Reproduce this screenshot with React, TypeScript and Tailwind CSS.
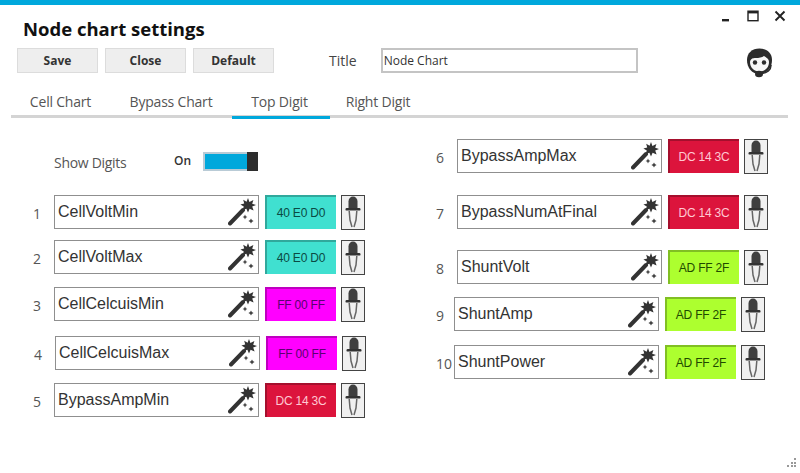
const seg = "font-['Open_Sans','Noto_Sans',sans-serif]";

function Wand() {
  return (
    <svg width="28" height="28" viewBox="0 0 28 28" className="shrink-0">
      <path d="M2 25.5 L15 12" stroke="#333" strokeWidth="4" strokeLinecap="round" />
      <path d="M20 0 L21.4 4 L25.4 2 L24.2 5.8 L28 7 L24.2 8.6 L25.6 12.6 L21.6 10.8 L20 14.6 L18.4 10.8 L14.6 12 L15.8 8.4 L12.4 6.4 L16.2 5.6 L15.2 1.8 L18.6 3.8 Z" fill="#333" />
      <path d="M17 16.6 l.8 1.6 1.6.8 -1.6.8 -.8 1.6 -.8-1.6 -1.6-.8 1.6-.8 z" fill="#444" />
      <path d="M23 20.4 l.9 1.7 1.7.9 -1.7.9 -.9 1.7 -.9-1.7 -1.7-.9 1.7-.9 z" fill="#444" />
    </svg>
  );
}

function Dropper() {
  return (
    <svg width="18" height="32" viewBox="0 0 18 32">
      <path d="M4.5 13 V5.5 a4.5 5 0 0 1 9 0 V13 Z" fill="#3f3f3f" />
      <rect x="1.5" y="12" width="15" height="2.6" rx="1.2" fill="#333" />
      <path d="M5.2 15 L6 24 L8 31 M12.8 15 L12 24 L10 31" fill="none" stroke="#666" strokeWidth="1.5" />
    </svg>
  );
}

function Avatar() {
  return (
    <svg width="27" height="30" viewBox="0 0 27 30">
      <path d="M13.5 0.5 C6 0.5 1 5 1 12 C1 20 6 26 13.5 26 C21 26 26 20 26 12 C26 5 21 0.5 13.5 0.5 Z" fill="#2b2b2b" />
      <path d="M4 14 C4.5 10.5 7 10 9.5 10 C13 10 16 9.5 18 8 C20 9.5 23 10.5 23 14 C23 19.5 19 23.5 13.5 23.5 C8 23.5 4 19.5 4 14 Z" fill="#f6f6f6" />
      <circle cx="9" cy="14.5" r="2.2" fill="#2b2b2b" />
      <circle cx="18" cy="14.5" r="2.2" fill="#2b2b2b" />
      <path d="M25 17 C25 22 21 25 16 25.5" fill="none" stroke="#2b2b2b" strokeWidth="1.6" />
      <ellipse cx="13" cy="26" rx="4" ry="3.2" fill="#2b2b2b" />
    </svg>
  );
}

type RowProps = {
  n: number;
  name: string;
  hex: string;
  bg: string;
  text: string;
  numW?: string;
  cls?: string;
};

function Row({ n, name, hex, bg, text, numW = "w-[24px]", cls = "" }: RowProps) {
  return (
    <div className={`flex items-center h-[34px] ${cls}`}>
      <span className={`${numW} shrink-0 pl-[3px] mt-[2px] text-[14px] text-[#555] ${seg}`}>{n}</span>
      <div className="w-[205px] h-[34px] border border-[#8f8f8f] bg-white flex items-center justify-between pl-[3px] pr-[2px] shrink-0">
        <span className="font-['Liberation_Sans',sans-serif] text-[16px] text-[#333]">{name}</span>
        <Wand />
      </div>
      <div className={`ml-[5.5px] w-[71px] h-[34px] ${bg} border-t-2 border-l-2 border-t-black/25 border-l-black/25 flex items-center justify-center shrink-0`}>
        <span className={`font-['Liberation_Sans',sans-serif] text-[12px] tracking-[-0.2px] ${text}`}>{hex}</span>
      </div>
      <div className="ml-[5px] w-[24px] h-[35px] border-[1.5px] border-[#444] bg-[#f0f0f0] flex items-center justify-center shrink-0">
        <Dropper />
      </div>
    </div>
  );
}

const teal = { hex: "40 E0 D0", bg: "bg-[#40e0d0]", text: "text-[#0b4a44]" };
const pink = { hex: "FF 00 FF", bg: "bg-[#ff00ff]", text: "text-[#5a0070]" };
const red = { hex: "DC 14 3C", bg: "bg-[#dc143c]", text: "text-[#ffc8d2]" };
const lime = { hex: "AD FF 2F", bg: "bg-[#adff2f]", text: "text-[#1f4a00]" };

function Btn({ label }: { label: string }) {
  return (
    <button className={`w-[81px] h-[25px] bg-[#eeeeee] border border-[#dcdcdc] text-[12px] font-bold text-[#333] ${seg}`}>
      {label}
    </button>
  );
}

function Tab({ label, active, cls }: { label: string; active?: boolean; cls: string }) {
  return (
    <div className={`h-[36px] flex items-center justify-center pt-[3px] text-[14px] tracking-[-0.2px] text-[#555] ${seg} border-b-[3px] -mb-[3px] ${active ? "border-[#00a8dc]" : "border-transparent"} ${cls}`}>
      {label}
    </div>
  );
}

export default function App() {
  return (
    <div className="relative w-[800px] h-[473px] bg-white overflow-hidden">
      <div className="h-[5px] bg-[#00a8dc]" />

      <div className="absolute top-[10px] right-[14px] flex items-center gap-[15px] text-[#222]">
        <svg width="11" height="12" viewBox="0 0 11 12"><rect x="1" y="9" width="7" height="2.4" fill="#222" /></svg>
        <svg width="12" height="12" viewBox="0 0 12 12"><rect x="1" y="1.2" width="10" height="9.5" fill="none" stroke="#222" strokeWidth="1.4" /><rect x="1" y="1" width="10" height="2.4" fill="#222" /></svg>
        <svg width="12" height="12" viewBox="0 0 12 12"><path d="M1.5 1.5 L10.5 10.5 M10.5 1.5 L1.5 10.5" stroke="#222" strokeWidth="1.9" /></svg>
      </div>

      <div className="absolute top-[48px] left-[746px]"><Avatar /></div>

      <h1 className={`ml-[23px] mt-[11px] h-[26px] leading-[26px] text-[18.5px] font-bold text-[#111] ${seg}`}>Node chart settings</h1>

      <div className="flex items-center mt-[6px] ml-[17px] h-[25px]">
        <div className="flex gap-[7px]">
          <Btn label="Save" />
          <Btn label="Close" />
          <Btn label="Default" />
        </div>
        <span className={`ml-[55px] text-[14px] text-[#444] ${seg}`}>Title</span>
        <div className={`ml-[24px] w-[257px] h-[25px] border-2 border-[#c4c4c4] bg-white flex items-center pl-[1px] text-[12px] text-[#333] ${seg}`}>Node Chart</div>
      </div>

      <div className="flex mt-[10px] ml-[11px] w-[777px] h-[35px] border-b-[3px] border-[#d4d4d4]">
        <Tab label="Cell Chart" cls="w-[99px]" />
        <Tab label="Bypass Chart" cls="w-[122px]" />
        <Tab label="Top Digit" active cls="w-[98px] pr-[3px]" />
        <Tab label="Right Digit" cls="w-[99px] pr-[3px]" />
      </div>

      <div className="flex mt-[19px]">
        <div className="ml-[30px] w-[403px] flex flex-col">
          <div className={`flex items-center h-[34px] mt-[7px] ml-[24px] text-[#555] ${seg}`}>
            <span className="text-[14px] tracking-[-0.3px] w-[120px] mt-[2px]">Show Digits</span>
            <span className="text-[12px] font-semibold text-[#333] w-[29px]">On</span>
            <div className="relative w-[55px] h-[19px] border-2 border-[#b9cbd6] bg-[#00a8dc]">
              <div className="absolute -right-[2px] -top-[2px] w-[11px] h-[19px] bg-[#2d2d2d]" />
            </div>
          </div>
          <Row n={1} name="CellVoltMin" {...teal} cls="mt-[17px]" />
          <Row n={2} name="CellVoltMax" {...teal} cls="mt-[11px]" />
          <Row n={3} name="CellCelcuisMin" {...pink} cls="mt-[13px]" />
          <Row n={4} name="CellCelcuisMax" {...pink} cls="mt-[15px] ml-[1px]" />
          <Row n={5} name="BypassAmpMin" {...red} cls="mt-[13px]" />
        </div>
        <div className="flex flex-col mt-[2px]">
          <Row n={6} name="BypassAmpMax" {...red} />
          <Row n={7} name="BypassNumAtFinal" {...red} cls="mt-[22px]" />
          <Row n={8} name="ShuntVolt" {...lime} cls="mt-[21px]" />
          <Row n={9} name="ShuntAmp" {...lime} numW="w-[21px]" cls="mt-[13px]" />
          <Row n={10} name="ShuntPower" {...lime} numW="w-[21px]" cls="mt-[14px]" />
        </div>
      </div>

      <div className="absolute right-[4px] bottom-[6px] grid grid-cols-3 gap-[1.5px]">
        <i /><i /><i className="w-[2px] h-[2px] bg-[#999]" />
        <i /><i className="w-[2px] h-[2px] bg-[#999]" /><i className="w-[2px] h-[2px] bg-[#999]" />
        <i className="w-[2px] h-[2px] bg-[#999]" /><i className="w-[2px] h-[2px] bg-[#999]" /><i className="w-[2px] h-[2px] bg-[#999]" />
      </div>
    </div>
  );
}
